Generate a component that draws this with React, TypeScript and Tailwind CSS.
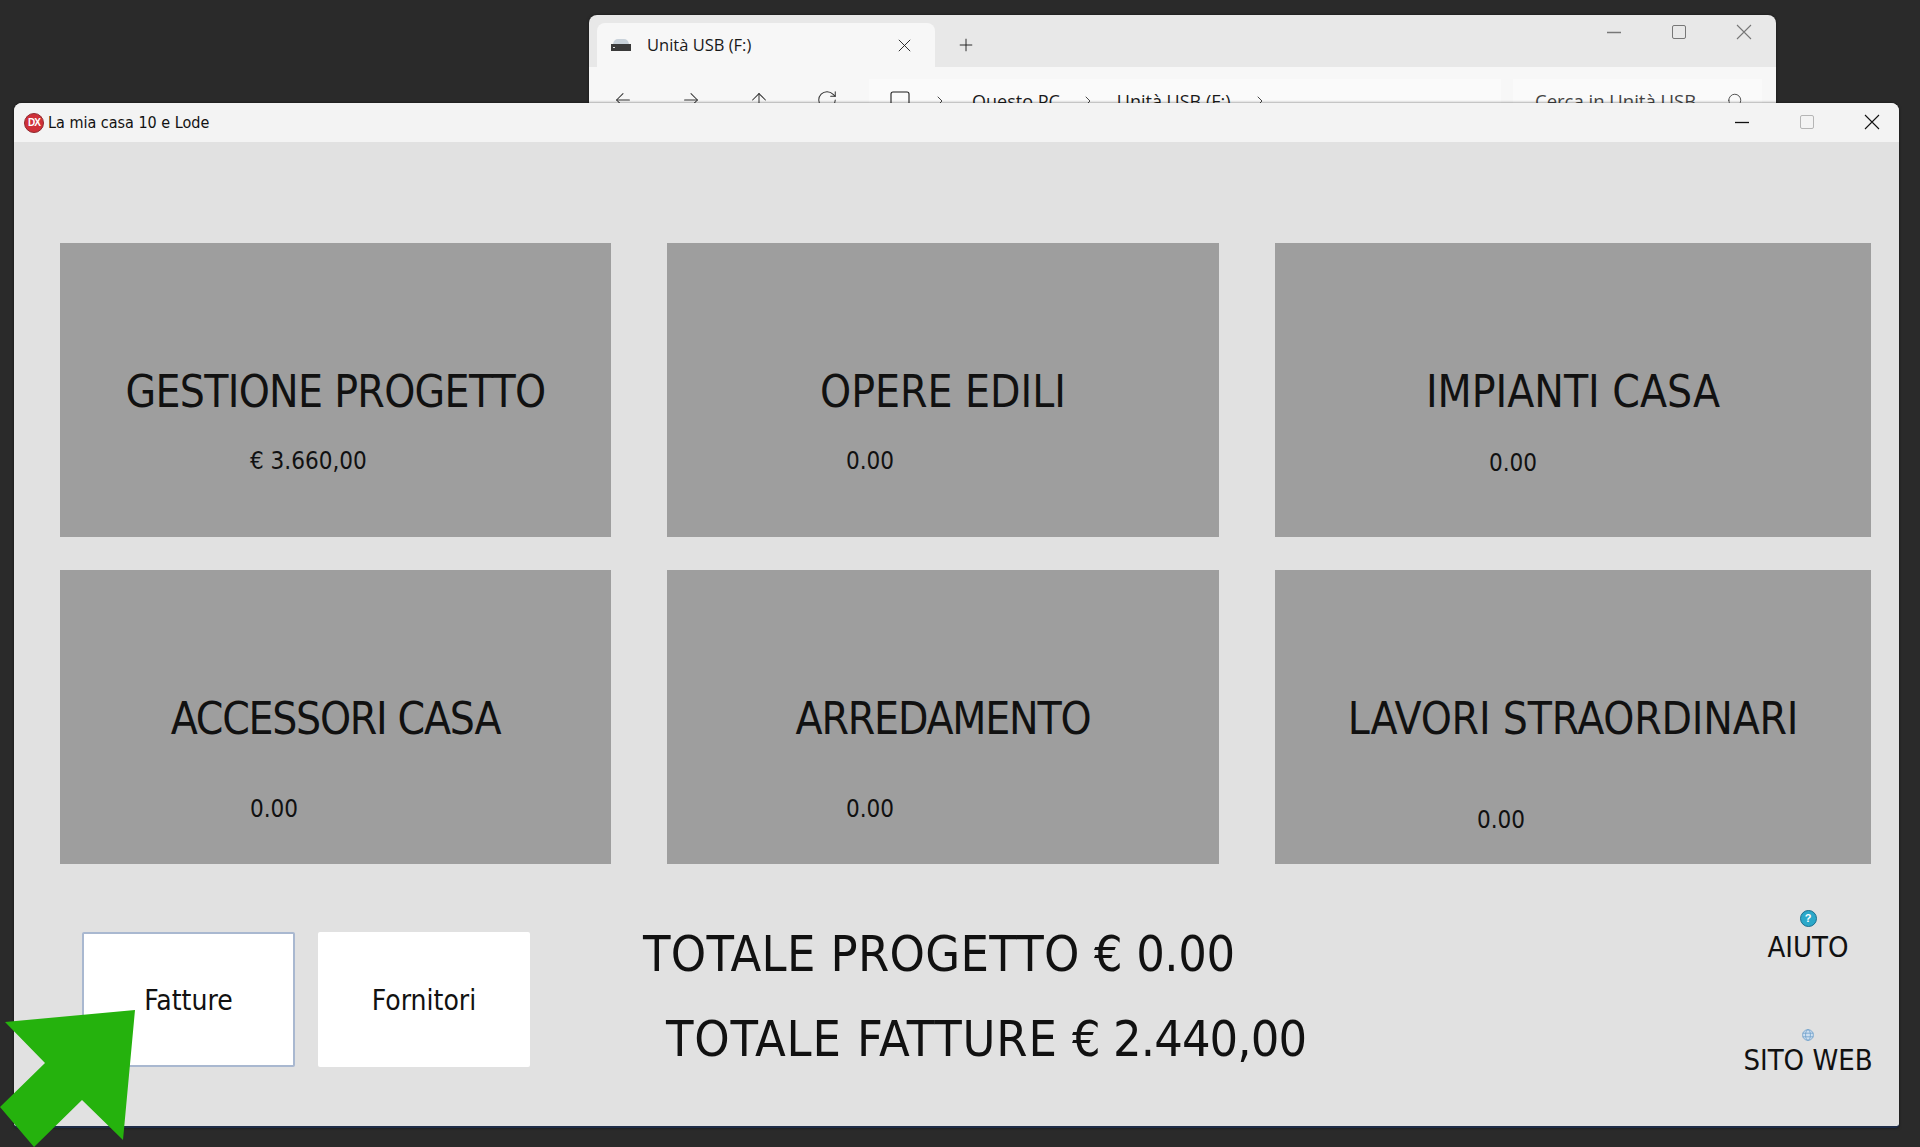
import { ChevronRight, Plus, RotateCw, Search, Square, ArrowLeft, ArrowRight, ArrowUp } from 'lucide-react'

const tahoma = "[font-family:'DejaVu_Sans',sans-serif] [font-stretch:condensed]"

type Card = { title: string; amount: string; titleClass: string; amountClass: string }

const cards: Card[] = [
  { title: 'GESTIONE PROGETTO', amount: '€ 3.660,00', titleClass: 'tracking-[-0.7px]', amountClass: 'mt-[28px] ml-[190px]' },
  { title: 'OPERE EDILI', amount: '0.00', titleClass: '', amountClass: 'mt-[28px] ml-[179px]' },
  { title: 'IMPIANTI CASA', amount: '0.00', titleClass: '', amountClass: 'mt-[30px] ml-[214px]' },
  { title: 'ACCESSORI CASA', amount: '0.00', titleClass: 'tracking-[-1.3px]', amountClass: 'mt-[49px] ml-[190px]' },
  { title: 'ARREDAMENTO', amount: '0.00', titleClass: 'tracking-[-1.2px]', amountClass: 'mt-[49px] ml-[179px]' },
  { title: 'LAVORI STRAORDINARI', amount: '0.00', titleClass: 'tracking-[-0.2px]', amountClass: 'mt-[60px] ml-[202px]' },
]

function MinIcon({ className }: { className?: string }) {
  return (
    <svg width="16" height="16" viewBox="0 0 16 16" className={className} stroke="currentColor" fill="none">
      <path d="M1 8.5H15" strokeWidth="1.3" />
    </svg>
  )
}

function MaxIcon({ className }: { className?: string }) {
  return (
    <svg width="16" height="16" viewBox="0 0 16 16" className={className} stroke="currentColor" fill="none">
      <rect x="1.5" y="1.5" width="13" height="13" rx="1.5" strokeWidth="1" />
    </svg>
  )
}

function CloseIcon({ size = 16, className }: { size?: number; className?: string }) {
  return (
    <svg width={size} height={size} viewBox="0 0 16 16" className={className} stroke="currentColor" fill="none">
      <path d="M1 1L15 15M15 1L1 15" strokeWidth="1.1" />
    </svg>
  )
}

function Explorer() {
  return (
    <div className="absolute left-[589px] top-[15px] h-[120px] w-[1187px] overflow-hidden rounded-t-lg bg-[#e8e8e8] font-['Open_Sans',sans-serif] [font-stretch:normal] text-[#1a1a1a] shadow-[0_0_3px_rgba(0,0,0,0.5)]">
      <div className="flex h-[52px] items-end pl-2">
        <div className="flex h-[44px] w-[338px] items-center rounded-t-lg bg-[#f7f7f7] pl-[14px] pr-[24px]">
          <svg width="20" height="12" viewBox="0 0 20 12">
            <path d="M2 5 Q3 0 7 0 H13 Q17 0 18 5 Z" fill="#c9d2da" />
            <rect x="0" y="5" width="20" height="7" fill="#3a3a3a" />
            <rect x="2" y="8" width="2" height="1" fill="#ddd" />
          </svg>
          <span className="ml-4 flex-1 text-[16.5px]">Unità USB (F:)</span>
          <CloseIcon size={13} />
        </div>
        <div className="ml-[21px] flex h-[44px] items-center">
          <Plus size={20} strokeWidth={1.1} />
        </div>
        <div className="ml-auto flex h-[52px] items-start gap-[49px] pt-[9px] pr-[24px] text-[#777]">
          <MinIcon />
          <MaxIcon />
          <CloseIcon />
        </div>
      </div>
      <div className="flex h-[68px] items-start bg-[#f7f7f7] pt-[12px] pl-[23px]">
        <div className="flex items-center gap-[46px] pt-[10px] text-[#333]">
          <ArrowLeft size={22} strokeWidth={1.1} />
          <ArrowRight size={22} strokeWidth={1.1} />
          <ArrowUp size={22} strokeWidth={1.1} />
          <RotateCw size={22} strokeWidth={1.1} />
        </div>
        <div className="ml-[31px] flex h-[44px] w-[632px] items-center bg-[#fafafa] pl-[19px] text-[18px]">
          <Square size={24} strokeWidth={1.1} />
          <ChevronRight size={16} strokeWidth={1.2} className="ml-[20px]" />
          <span className="ml-[24px]">Questo PC</span>
          <ChevronRight size={16} strokeWidth={1.2} className="ml-[20px]" />
          <span className="ml-[21px]">Unità USB (F:)</span>
          <ChevronRight size={16} strokeWidth={1.2} className="ml-[21px]" />
        </div>
        <div className="ml-[12px] flex h-[44px] w-[249px] items-center bg-[#fafafa] pl-[22px] text-[18.5px] text-[#444]">
          <span className="whitespace-nowrap">Cerca in Unità USB</span>
          <Search size={18} strokeWidth={1.2} className="ml-[29px] -scale-x-100" />
        </div>
      </div>
    </div>
  )
}

function DxIcon() {
  return (
    <span className="flex h-[20px] w-[20px] items-center justify-center rounded-full border border-[#8f2a30] bg-[#cf3038] text-[10px] font-bold leading-none tracking-[-1px] text-white [font-family:'Liberation_Sans',sans-serif]">
      DX
    </span>
  )
}

function HelpIcon() {
  return (
    <span className="flex h-[17px] w-[17px] items-center justify-center rounded-full border border-[#1b6f8f] bg-[#2ba8c9] text-[11px] font-bold leading-none text-white [font-family:'Liberation_Sans',sans-serif]">
      ?
    </span>
  )
}

function GlobeIcon() {
  return (
    <svg width="12" height="12" viewBox="0 0 12 12" fill="none" stroke="#6f9fca" strokeWidth="0.8">
      <circle cx="6" cy="6" r="5.4" fill="#cfe0f0" />
      <ellipse cx="6" cy="6" rx="2.4" ry="5.4" />
      <path d="M0.6 4.2H11.4M0.6 7.8H11.4" />
    </svg>
  )
}

function Arrow() {
  return (
    <svg className="absolute bottom-0 left-0" width="140" height="145" viewBox="0 1002 140 145">
      <polygon points="135,1010 5,1022 45,1063 0,1107 34,1147 82,1100 123,1140" fill="#25b20d" />
    </svg>
  )
}

export default function App() {
  return (
    <div className={`relative h-[1147px] w-[1920px] overflow-hidden bg-[#2a2a2a] text-[#111] ${tahoma}`}>
      <Explorer />

      <div className="absolute left-[14px] top-[103px] flex h-[1025px] w-[1885px] flex-col rounded-t-lg rounded-b-sm border-b-2 border-[#1e2c47] bg-[#e1e1e1] shadow-[0_0_3px_rgba(0,0,0,0.6)]">
        <div className="flex h-[39px] shrink-0 items-center rounded-t-lg bg-[#f3f3f3] pl-[10px]">
          <DxIcon />
          <span className="ml-[4px] text-[16px]">La mia casa 10 e Lode</span>
          <div className="ml-auto flex items-center gap-[49px] pr-[19px] pb-[2px] text-[#111]">
            <MinIcon />
            <MaxIcon className="text-[#b5b5b5]" />
            <CloseIcon />
          </div>
        </div>

        <div className="grid grid-cols-[551px_552px_596px] gap-x-[56px] gap-y-[33px] pl-[46px] pt-[101px]">
          {cards.map(card => (
            <div key={card.title} className="h-[294px] bg-[#9e9e9e] pt-[123px]">
              <div className={`text-center text-[44px] leading-[52px] ${card.titleClass}`}>{card.title}</div>
              <div className={`text-[24px] leading-[30px] ${card.amountClass}`}>{card.amount}</div>
            </div>
          ))}
        </div>

        <div className="flex pt-[68px]">
          <button className="ml-[68px] h-[135px] w-[213px] rounded-[2px] border-2 border-[#a9b8d0] bg-white pt-[3px] text-[28px]">
            Fatture
          </button>
          <button className="ml-[23px] h-[135px] w-[212px] rounded-[2px] bg-white pt-[3px] text-[28px]">Fornitori</button>
          <div className="ml-[113px] whitespace-nowrap text-[50px] leading-[60px]">
            <div className="-mt-[8px]">
              <span className="tracking-[0.35px]">TOTALE PROGETTO</span> <span className="tracking-[-0.4px]">€ 0.00</span>
            </div>
            <div className="ml-[23px] mt-[25px]">
              <span className="tracking-[0.85px]">TOTALE FATTURE</span> <span className="tracking-[-0.9px]">€ 2.440,00</span>
            </div>
          </div>
          <div className="ml-auto mr-[27px] -mt-[22px] flex w-[128px] flex-col items-center text-[29px] leading-[34px]">
            <HelpIcon />
            <span className="mt-[3px]">AIUTO</span>
            <div className="mt-[65px]">
              <GlobeIcon />
            </div>
            <span className="mt-[2px] whitespace-nowrap">SITO WEB</span>
          </div>
        </div>
      </div>

      <Arrow />
    </div>
  )
}
